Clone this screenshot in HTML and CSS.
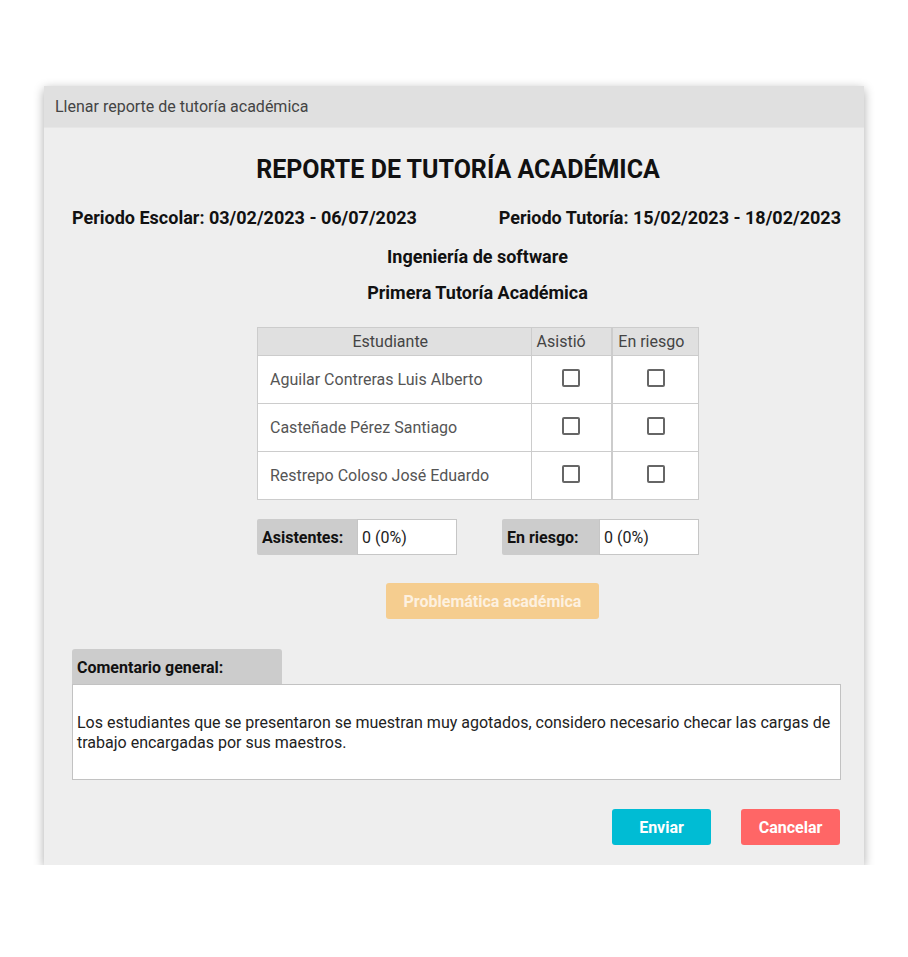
FILE: index.html
```html
<!DOCTYPE html>
<html lang="es">
<head>
<meta charset="utf-8">
<title>Llenar reporte de tutoría académica</title>
<link rel="stylesheet" href="styles.css">
</head>
<body>
<div class="dialog">
  <div class="dialog-header">Llenar reporte de tutoría académica</div>
  <div class="dialog-body">
    <h1 class="title">REPORTE DE TUTORÍA ACADÉMICA</h1>
    <div class="periods">
      <span>Periodo Escolar: 03/02/2023 - 06/07/2023</span>
      <span>Periodo Tutoría: 15/02/2023 - 18/02/2023</span>
    </div>
    <div class="subtitle sub1">Ingeniería de software</div>
    <div class="subtitle sub2">Primera Tutoría Académica</div>

    <div class="table-wrap">
      <table class="students">
        <thead>
          <tr>
            <th class="c-name">Estudiante</th>
            <th class="c-att">Asistió</th>
            <th class="c-risk">En riesgo</th>
          </tr>
        </thead>
        <tbody>
          <tr>
            <td class="c-name">Aguilar Contreras Luis Alberto</td>
            <td class="c-att"><span class="cb"></span></td>
            <td class="c-risk"><span class="cb"></span></td>
          </tr>
          <tr>
            <td class="c-name">Casteñade Pérez Santiago</td>
            <td class="c-att"><span class="cb"></span></td>
            <td class="c-risk"><span class="cb"></span></td>
          </tr>
          <tr>
            <td class="c-name">Restrepo Coloso José Eduardo</td>
            <td class="c-att"><span class="cb"></span></td>
            <td class="c-risk"><span class="cb"></span></td>
          </tr>
        </tbody>
      </table>

      <div class="summary">
        <div class="field f1">
          <span class="field-label">Asistentes:</span>
          <span class="field-value">0 (0%)</span>
        </div>
        <div class="field f2">
          <span class="field-label">En riesgo:</span>
          <span class="field-value">0 (0%)</span>
        </div>
      </div>
    </div>

    <div class="problem-row">
      <button class="btn btn-problem">Problemática académica</button>
    </div>

    <div class="comment">
      <div class="comment-label">Comentario general:</div>
      <div class="comment-box">Los estudiantes que se presentaron se muestran muy agotados, considero necesario checar las cargas de trabajo encargadas por sus maestros.</div>
    </div>

    <div class="actions">
      <button class="btn btn-send">Enviar</button>
      <button class="btn btn-cancel">Cancelar</button>
    </div>
  </div>
</div>
</body>
</html>
```

FILE: styles.css
```css
* { box-sizing: border-box; }
html, body {
  margin: 0;
  padding: 0;
  background: #ffffff;
  font-family: Roboto, "Liberation Sans", Arial, sans-serif;
}
body {
  padding: 86px 0 0 44px;
}
.dialog {
  width: 820px;
  height: 779px;
  background: #eeeeee;
  box-shadow: 0 3px 10px rgba(0,0,0,0.33);
}
.dialog-header {
  height: 42px;
  background: #e0e0e0;
  border-bottom: 1px solid #e6e6e6;
  color: #444;
  font-size: 16px;
  padding: 12px 0 0 11px;
  line-height: 18px;
}
.dialog-body {
  padding: 0 23px 0 28px;
}
.title {
  margin: 0;
  padding-top: 27px;
  height: 73px;
  font-size: 25px;
  font-weight: 700;
  text-align: center;
  color: #111;
  line-height: 30px;
  margin-left: 3px;
}
.periods {
  display: flex;
  justify-content: space-between;
  font-size: 18px;
  font-weight: 700;
  color: #111;
  line-height: 22px;
  height: 22px;
  margin-top: 6px;
}
.subtitle {
  text-align: center;
  font-size: 18px;
  font-weight: 700;
  color: #111;
  line-height: 22px;
  margin-left: 42px;
}
.sub1 { margin-top: 17px; }
.sub2 { margin-top: 14px; }
.table-wrap {
  width: 442px;
  margin: 23px 0 0 185px;
}
.students {
  width: 442px;
  border-collapse: collapse;
  background: #fff;
  font-size: 16px;
  table-layout: fixed;
}
.students th, .students td {
  border: 1px solid #cccccc;
  padding: 0;
}
.students th {
  background: #e0e0e0;
  font-weight: 400;
  color: #444;
  height: 28px;
  text-align: left;
  padding-left: 5px;
}
.students th.c-name {
  text-align: center;
  padding: 0 8px 0 0;
}
.students td {
  height: 48px;
  color: #555;
}
.students td.c-name { padding-left: 12px; }
.students td.c-att, .students td.c-risk { text-align: center; }
.c-name { width: 273px; }
.c-att { width: 81px; border-right: 2px solid #cccccc !important; }
.c-risk { width: 86px; }
.cb {
  display: inline-block;
  width: 18px;
  height: 18px;
  border: 2px solid #666;
  border-radius: 2px;
  vertical-align: middle;
  position: relative;
  top: -2px;
  background: #fff;
}
.summary {
  display: flex;
  justify-content: space-between;
  margin-top: 19px;
}
.field {
  display: flex;
  height: 36px;
  font-size: 16px;
}
.field-label {
  background: #cccccc;
  font-weight: 700;
  color: #111;
  display: flex;
  align-items: center;
  padding-left: 5px;
  border-radius: 2px 0 0 2px;
}
.f1 .field-label { width: 100px; }
.f2 .field-label { width: 97px; }
.field-value {
  background: #fff;
  border: 1px solid #c6c6c6;
  width: 100px;
  display: flex;
  align-items: center;
  padding-left: 4px;
  color: #222;
}
.problem-row {
  margin-top: 28px;
  padding-left: 314px;
}
.btn {
  font-family: inherit;
  font-size: 16px;
  font-weight: 700;
  border: none;
  border-radius: 3px;
  height: 36px;
  color: #fff;
  padding: 0;
  cursor: pointer;
}
.btn-problem {
  width: 213px;
  background: #f5cd8f;
  color: #fdf1e0;
}
.comment {
  margin-top: 30px;
}
.comment-label {
  width: 210px;
  height: 35px;
  background: #cccccc;
  border-radius: 3px 3px 0 0;
  font-size: 16px;
  font-weight: 700;
  color: #111;
  padding: 9px 0 0 5px;
  line-height: 19px;
}
.comment-box {
  height: 96px;
  background: #fff;
  border: 1px solid #c2c2c2;
  font-size: 16px;
  line-height: 20px;
  color: #222;
  padding: 28px 4px 0 4px;
}
.actions {
  display: flex;
  justify-content: flex-end;
  gap: 30px;
  margin-top: 29px;
  padding-right: 1px;
}
.btn-send {
  width: 99px;
  background: #00bcd4;
}
.btn-cancel {
  width: 99px;
  background: #ff6666;
}
```
